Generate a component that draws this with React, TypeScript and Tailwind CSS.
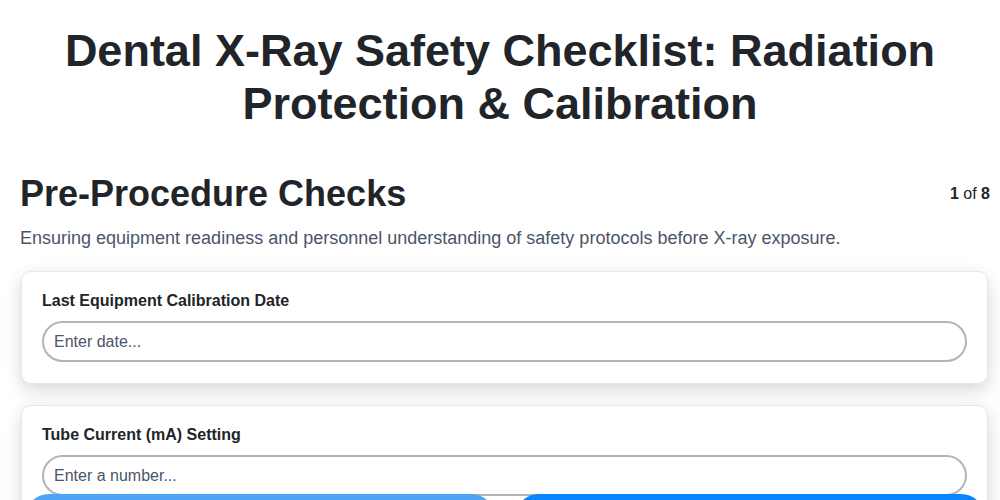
import { useState } from 'react';

const FONT = { fontFamily: '"Liberation Sans", Arial, sans-serif' };

type Field = { id: string; label: string; placeholder: string; type: string };

const FIELDS: Field[] = [
  { id: 'calibration', label: 'Last Equipment Calibration Date', placeholder: 'Enter date...', type: 'text' },
  { id: 'tube-current', label: 'Tube Current (mA) Setting', placeholder: 'Enter a number...', type: 'text' },
];

export default function App() {
  const [values, setValues] = useState<Record<string, string>>({});

  return (
    <div className="min-h-screen bg-white text-[#212529]" style={FONT}>
      <h1 className="px-12 pt-6 text-center text-[45px] font-bold leading-[53px]">
        Dental X-Ray Safety Checklist: Radiation Protection &amp; Calibration
      </h1>

      <main className="pl-5 pr-[10px] pt-[42px] pb-24">
        <div className="flex items-start justify-between">
          <h2 className="text-[36px] font-bold leading-[1.2]">Pre-Procedure Checks</h2>
          <span className="mt-[10px] text-base">
            <b>1</b> of <b>8</b>
          </span>
        </div>
        <p className="mt-[9px] text-lg text-[#4a5568]">
          Ensuring equipment readiness and personnel understanding of safety protocols before X-ray exposure.
        </p>

        <div className="mt-[19px] ml-px mr-[2px] flex flex-col gap-[21px]">
          {FIELDS.map((f) => (
            <div
              key={f.id}
              className="rounded-[10px] border border-[#e5e7eb] bg-white px-5 pt-[17px] pb-[21px] shadow-[0_6px_18px_rgba(0,0,0,0.16)]"
            >
              <label htmlFor={f.id} className="block text-base font-bold">
                {f.label}
              </label>
              <input
                id={f.id}
                type={f.type}
                value={values[f.id] ?? ''}
                onChange={(e) => setValues({ ...values, [f.id]: e.target.value })}
                placeholder={f.placeholder}
                className="mt-2 h-[41px] w-full rounded-full border-2 border-[#adb5bd] px-[10px] text-base text-[#212529] outline-none placeholder:text-[#4a5568]"
              />
            </div>
          ))}
        </div>
      </main>

      <div className="fixed inset-x-0 top-[494px] flex gap-5 pl-[25px] pr-[15px]">
        <button className="h-[60px] flex-1 rounded-3xl bg-[#4da3f7] text-base font-bold text-white">
          Previous
        </button>
        <button className="h-[60px] flex-1 rounded-3xl bg-[#0a84ff] text-base font-bold text-white">
          Next
        </button>
      </div>
    </div>
  );
}
